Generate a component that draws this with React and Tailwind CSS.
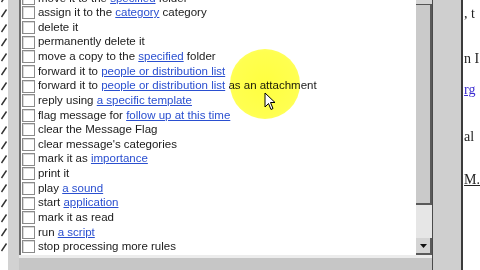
import React from 'react';

const rows = [
  [['move it to the '], ['specified', true], [' folder']],
  [['assign it to the '], ['category', true], [' category']],
  [['delete it']],
  [['permanently delete it']],
  [['move a copy to the '], ['specified', true], [' folder']],
  [['forward it to '], ['people or distribution list', true]],
  [['forward it to '], ['people or distribution list', true], [' as an attachment']],
  [['reply using '], ['a specific template', true]],
  [['flag message for '], ['follow up at this time', true]],
  [['clear the Message Flag']],
  [["clear message's categories"]],
  [['mark it as '], ['importance', true]],
  [['print it']],
  [['play '], ['a sound', true]],
  [['start '], ['application', true]],
  [['mark it as read']],
  [['run '], ['a script', true]],
  [['stop processing more rules']],
];

function Tick() {
  return (
    <div className="h-[14.625px] flex items-center">
      <svg width="8" height="10" viewBox="0 0 8 10">
        <path d="M1.5 9 L6.5 1.5" stroke="#333" strokeWidth="1.4" fill="none" />
      </svg>
    </div>
  );
}

function Row({ parts }) {
  return (
    <div className="h-[14.625px] flex items-center gap-[3px] pl-[1px]">
      <div className="w-[13px] h-[13px] shrink-0 border border-[#8a8a8a] bg-white shadow-[inset_1px_1px_0_#d8d8d8]" />
      <span className="whitespace-nowrap text-[11.5px] leading-none text-[#1a1a1a]">
        {parts.map(([t, link], i) =>
          link ? (
            <span key={i} className="text-[#2a4fd0] underline underline-offset-1">{t}</span>
          ) : (
            <span key={i}>{t}</span>
          )
        )}
      </span>
    </div>
  );
}

export default function App() {
  return (
    <div
      className="w-[480px] h-[270px] overflow-hidden flex bg-[#d0d0d0] relative"
      style={{ fontFamily: '"Liberation Sans", Arial, sans-serif' }}
    >
      {/* left edge with cut ticks */}
      <div className="w-[8px] bg-white flex flex-col mt-[-9px]">
        {rows.map((_, i) => (
          <Tick key={i} />
        ))}
      </div>
      <div className="w-[11px] bg-[#d2d2d2]" />

      {/* main rule list */}
      <div className="w-[417px] flex flex-col">
        <div className="h-[255px] flex border-l-2 border-[#6e6e6e]">
          <div className="flex-1 bg-white overflow-hidden">
            <div className="mt-[-9px]">
              {rows.map((r, i) => (
                <Row key={i} parts={r} />
              ))}
            </div>
          </div>
          {/* scrollbar */}
          <div className="w-[16px] flex flex-col bg-[#e6e6e6]">
            <div className="h-[5px] bg-[#d4d4d4] border-b border-[#555]" />
            <div className="h-[200px] bg-[#cacaca] border-r-2 border-b-2 border-[#5a5a5a]" />
            <div className="flex-1" />
            <div className="h-[17px] bg-[#d4d4d4] border-r-2 border-b-2 border-[#5a5a5a] flex items-center justify-center">
              <svg width="7" height="4" viewBox="0 0 7 4">
                <path d="M0 0 H7 L3.5 4 Z" fill="#111" />
              </svg>
            </div>
          </div>
        </div>
        <div className="h-[3px] bg-[#ececec]" />
        <div className="flex-1 bg-[#c6c6c6]" />
      </div>

      {/* right side */}
      <div className="w-[1px] bg-[#4a4a4a]" />
      <div className="w-[28px] bg-[#cfcfcf]" />
      <div className="w-[2px] bg-[#3a3a3a]" />
      <div
        className="flex-1 bg-white text-[14px] leading-none text-[#222] flex flex-col pl-[1px]"
        style={{ fontFamily: '"Liberation Serif", "Times New Roman", serif' }}
      >
        <div className="h-[7px]" />
        <div className="h-[16px]">, t</div>
        <div className="h-[29px]" />
        <div className="h-[16px]">n I</div>
        <div className="h-[15px]" />
        <div className="h-[16px] text-[#3a2bd0] underline">rg</div>
        <div className="h-[31px]" />
        <div className="h-[16px]">al</div>
        <div className="h-[27px]" />
        <div className="h-[16px] underline">M.</div>
      </div>

      {/* cursor highlight */}
      <div className="absolute left-[230px] top-[49px] w-[70px] h-[70px] rounded-full bg-[radial-gradient(circle,#ffff40_0%,#ffff50_65%,#ffff90_100%)] mix-blend-multiply" />
      <svg className="absolute left-[264px] top-[92px]" width="12" height="19" viewBox="0 0 12 19">
        <path d="M1 1 L1 15 L4.5 11.5 L7 17.5 L9 16.5 L6.5 10.5 L11 10.5 Z" fill="#fff" stroke="#000" strokeWidth="1" />
      </svg>
    </div>
  );
}
